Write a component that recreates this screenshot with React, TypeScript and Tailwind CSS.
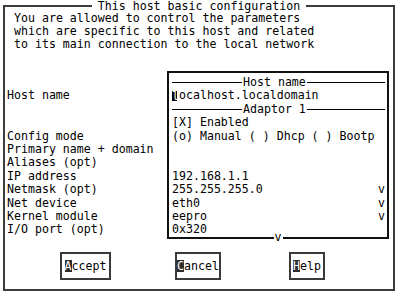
// Host basic configuration dialog, drawn in a text-mode look.

const labels = [
  "",
  "Host name",
  "",
  "",
  "Config mode",
  "Primary name + domain",
  "Aliases (opt)",
  "IP address",
  "Netmask (opt)",
  "Net device",
  "Kernel module",
  "I/O port (opt)",
];

/** A horizontal rule with a caption, as the box-drawing headers inside the panel. */
function Rule({ label }: { label: string }) {
  return (
    <div className="flex h-[13.4px] items-center">
      <div className="h-px w-[70px] bg-black" />
      <span className="px-px leading-[13.4px]">{label}</span>
      <div className="h-px flex-1 bg-black" />
    </div>
  );
}

/** One value row; `more` shows the "v" pull-down marker at the right. */
function Row({ children, more }: { children?: React.ReactNode; more?: boolean }) {
  return (
    <div className="flex h-[13.4px] items-center justify-between whitespace-pre leading-[13.4px]">
      <span>{children}</span>
      {more && <span className="w-[7px]">v</span>}
    </div>
  );
}

function Button({ hot, rest, width }: { hot: string; rest: string; width: string }) {
  return (
    <button
      type="button"
      className={`flex h-[28px] items-center justify-center border-2 border-[#3a3a3a] bg-white leading-[12px] ${width}`}
    >
      <span className="bg-[#2e2e2e] text-white">{hot}</span>
      {rest}
    </button>
  );
}

export default function App() {
  return (
    <div className="h-[295px] w-[400px] overflow-hidden bg-white font-['DejaVu_Sans_Mono',monospace] text-[11.6px] text-black">
      <fieldset className="ml-[3px] h-[291px] w-[392px] border-2 border-[#3c3c3c] p-0">
        <legend className="mx-auto px-[6px] leading-[12px]">This host basic configuration</legend>

        <div className="pl-[9px] leading-[13px]">
          <p>You are allowed to control the parameters</p>
          <p>which are specific to this host and related</p>
          <p>to its main connection to the local network</p>
        </div>

        <div className="mt-[20px] flex">
          <div className="w-[162px] pl-[2px] pt-[5px]">
            {labels.map((l, i) => (
              <div key={i} className="h-[13.4px] whitespace-pre leading-[13.4px]">
                {l}
              </div>
            ))}
          </div>

          <div className="flex w-[222px] flex-col border-x-2 border-t-2 border-[#111]">
            <div className="pl-[3px] pr-[2px] pt-[3px]">
              <Rule label="Host name" />
              <Row>
                <span className="mr-[2px] inline-block h-[10px] w-[5px] overflow-hidden bg-black align-[-2px] leading-[10px] text-white">
                  l
                </span>
                ocalhost.localdomain
              </Row>
              <Rule label="Adaptor 1" />
              <Row>[X] Enabled</Row>
              <Row>(o) Manual ( ) Dhcp ( ) Bootp</Row>
              <Row />
              <Row />
              <Row>192.168.1.1</Row>
              <Row more>255.255.255.0</Row>
              <Row more>eth0</Row>
              <Row more>eepro</Row>
              <Row>0x320</Row>
            </div>
            <div className="flex h-[2px] items-center">
              <div className="h-[2px] flex-1 bg-[#111]" />
              <span className="px-px leading-none">v</span>
              <div className="h-[2px] flex-1 bg-[#111]" />
            </div>
          </div>
        </div>

        <div className="mt-[13px] flex">
          <div className="ml-[55px]">
            <Button hot="A" rest="ccept" width="w-[51px]" />
          </div>
          <div className="ml-[64px]">
            <Button hot="C" rest="ancel" width="w-[46px]" />
          </div>
          <div className="ml-[68px]">
            <Button hot="H" rest="elp" width="w-[36px]" />
          </div>
        </div>
      </fieldset>
    </div>
  );
}
